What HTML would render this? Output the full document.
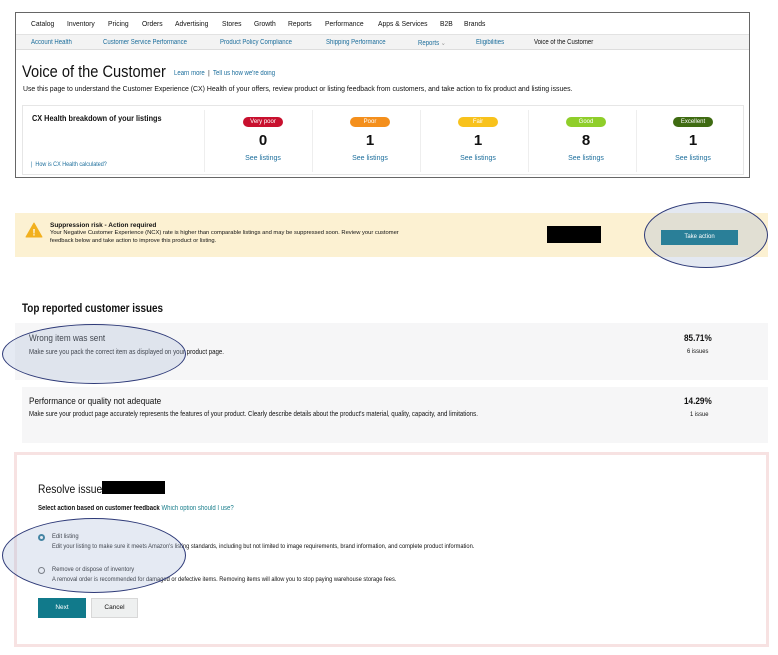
<!DOCTYPE html>
<html><head><style>
*{margin:0;padding:0;box-sizing:border-box}
body{width:778px;height:655px;background:#fff;font-family:"Liberation Sans",sans-serif;position:relative;overflow:hidden;color:#111}
.a{position:absolute;white-space:nowrap}
.c{transform-origin:0 0;transform:scaleX(.86)}
.l{color:#1c6e9c}
.nav{position:absolute;top:19px;font-size:7.5px;transform-origin:0 0;transform:scaleX(.9);white-space:nowrap}
.badge{position:absolute;width:40px;height:10px;border-radius:5px;color:#fff;font-size:6px;line-height:10px;text-align:center}
.num{position:absolute;width:60px;text-align:center;font-size:15px;font-weight:bold}
.see{position:absolute;width:60px;text-align:center;font-size:7px;color:#1c6e9c}
</style></head><body>
<div class="a" style="left:15px;top:12px;width:735px;height:166px;border:1px solid #666"></div>
<div class="a" style="left:16px;top:34px;width:733px;height:16px;background:#f3f3f3;border-top:1px solid #e2e2e2;border-bottom:1px solid #ddd"></div>
<div class="nav" style="left:31px">Catalog</div>
<div class="nav" style="left:67px">Inventory</div>
<div class="nav" style="left:108px">Pricing</div>
<div class="nav" style="left:142px">Orders</div>
<div class="nav" style="left:175px">Advertising</div>
<div class="nav" style="left:222px">Stores</div>
<div class="nav" style="left:254px">Growth</div>
<div class="nav" style="left:288px">Reports</div>
<div class="nav" style="left:325px">Performance</div>
<div class="nav" style="left:378px">Apps &amp; Services</div>
<div class="nav" style="left:440px">B2B</div>
<div class="nav" style="left:464px">Brands</div>
<div class="a l c" style="left:31px;top:39px;font-size:7px">Account Health</div>
<div class="a l c" style="left:103px;top:39px;font-size:7px">Customer Service Performance</div>
<div class="a l c" style="left:220px;top:39px;font-size:7px">Product Policy Compliance</div>
<div class="a l c" style="left:326px;top:39px;font-size:7px">Shipping Performance</div>
<div class="a l c" style="left:418px;top:39px;font-size:7px">Reports <span style="color:#999">⌄</span></div>
<div class="a l c" style="left:476px;top:39px;font-size:7px">Eligibilities</div>
<div class="a c" style="left:534px;top:39px;font-size:7px">Voice of the Customer</div>
<div class="a c" style="left:22px;top:62px;font-size:17px">Voice of the Customer</div>
<div class="a c" style="left:174px;top:70px;font-size:7px"><span class="l">Learn more</span> &nbsp;| &nbsp;<span class="l">Tell us how we're doing</span></div>
<div class="a" style="left:23px;top:86px;font-size:6.9px">Use this page to understand the Customer Experience (CX) Health of your offers, review product or listing feedback from customers, and take action to fix product and listing issues.</div>
<div class="a" style="left:22px;top:105px;width:722px;height:70px;border:1px solid #e6e6e6"></div>
<div class="a c" style="left:32px;top:113px;font-size:8.5px;font-weight:bold">CX Health breakdown of your listings</div>
<div class="a l c" style="left:31px;top:161px;font-size:6.3px">|&nbsp; How is CX Health calculated?</div>
<div class="a" style="left:204px;top:110px;width:1px;height:62px;background:#eee"></div>
<div class="a" style="left:312px;top:110px;width:1px;height:62px;background:#eee"></div>
<div class="a" style="left:420px;top:110px;width:1px;height:62px;background:#eee"></div>
<div class="a" style="left:528px;top:110px;width:1px;height:62px;background:#eee"></div>
<div class="a" style="left:636px;top:110px;width:1px;height:62px;background:#eee"></div>
<div class="badge" style="left:243px;top:117px;background:#c8102e">Very poor</div>
<div class="badge" style="left:350px;top:117px;background:#f48f1c">Poor</div>
<div class="badge" style="left:458px;top:117px;background:#f8c21c">Fair</div>
<div class="badge" style="left:566px;top:117px;background:#8fce2a">Good</div>
<div class="badge" style="left:673px;top:117px;background:#3f6b12">Excellent</div>
<div class="num" style="left:233px;top:132px">0</div>
<div class="num" style="left:340px;top:132px">1</div>
<div class="num" style="left:448px;top:132px">1</div>
<div class="num" style="left:556px;top:132px">8</div>
<div class="num" style="left:663px;top:132px">1</div>
<div class="see" style="left:233px;top:155px">See listings</div>
<div class="see" style="left:340px;top:155px">See listings</div>
<div class="see" style="left:448px;top:155px">See listings</div>
<div class="see" style="left:556px;top:155px">See listings</div>
<div class="see" style="left:663px;top:155px">See listings</div>

<div class="a" style="left:15px;top:213px;width:753px;height:44px;background:#fcf1d2"></div>
<svg class="a" style="left:25px;top:222px" width="18" height="16"><path d="M9 1 L17 15 L1 15 Z" fill="#f2b01e" stroke="#f2b01e" stroke-linejoin="round"/><text x="9" y="13.5" font-size="9" font-weight="bold" fill="#fff" text-anchor="middle" font-family="Liberation Sans">!</text></svg>
<div class="a" style="left:50px;top:222px;font-size:6.5px;font-weight:bold">Suppression risk - Action required</div>
<div class="a" style="left:50px;top:230px;font-size:5.8px;line-height:7.5px">Your Negative Customer Experience (NCX) rate is higher than comparable listings and may be suppressed soon. Review your customer<br>feedback below and take action to improve this product or listing.</div>
<div class="a" style="left:547px;top:226px;width:54px;height:17px;background:#000"></div>
<div class="a" style="left:644px;top:202px;width:124px;height:66px;border-radius:50%;background:rgba(175,190,215,.35);border:1px solid #2e3a78"></div>
<div class="a" style="left:661px;top:230px;width:77px;height:15px;background:#2a7f98;color:#fff;font-size:6px;line-height:15px;text-align:center">Take action</div>

<div class="a c" style="left:22px;top:303px;font-size:11.5px;font-weight:bold">Top reported customer issues</div>
<div class="a" style="left:15px;top:323px;width:753px;height:57px;background:#f6f6f7"></div>
<div class="a" style="left:22px;top:387px;width:746px;height:56px;background:#f6f6f7"></div>
<div class="a c" style="left:29px;top:333px;font-size:9.5px">Wrong item was sent</div>
<div class="a c" style="left:29px;top:348px;font-size:7.1px">Make sure you pack the correct item as displayed on your product page.</div>
<div class="a c" style="left:684px;top:333px;font-size:9.5px;font-weight:bold">85.71%</div>
<div class="a c" style="left:687px;top:348px;font-size:6.8px">6 issues</div>
<div class="a c" style="left:29px;top:396px;font-size:9.5px">Performance or quality not adequate</div>
<div class="a c" style="left:29px;top:410px;font-size:7.1px">Make sure your product page accurately represents the features of your product. Clearly describe details about the product's material, quality, capacity, and limitations.</div>
<div class="a c" style="left:684px;top:396px;font-size:9.5px;font-weight:bold">14.29%</div>
<div class="a c" style="left:690px;top:411px;font-size:6.8px">1 issue</div>
<div class="a" style="left:2px;top:324px;width:184px;height:60px;border-radius:50%;background:rgba(170,185,215,.3);border:1px solid #2e3a78"></div>

<div class="a" style="left:14px;top:452px;width:755px;height:195px;border:3px solid #f7e2e2"></div>
<div class="a c" style="left:38px;top:482px;font-size:12px">Resolve issue:</div>
<div class="a" style="left:102px;top:481px;width:63px;height:13px;background:#000"></div>
<div class="a c" style="left:38px;top:505px;font-size:7px"><b>Select action based on customer feedback</b> <span style="color:#1a7e8c">Which option should I use?</span></div>
<div class="a" style="left:38px;top:534px;width:7px;height:7px;border-radius:50%;border:2px solid #1a6f8f"></div>
<div class="a c" style="left:52px;top:533px;font-size:6.8px">Edit listing</div>
<div class="a c" style="left:52px;top:543px;font-size:6.65px">Edit your listing to make sure it meets Amazon's listing standards, including but not limited to image requirements, brand information, and complete product information.</div>
<div class="a" style="left:38px;top:567px;width:7px;height:7px;border-radius:50%;border:1px solid #666"></div>
<div class="a c" style="left:52px;top:566px;font-size:6.8px">Remove or dispose of inventory</div>
<div class="a c" style="left:52px;top:576px;font-size:6.65px">A removal order is recommended for damaged or defective items. Removing items will allow you to stop paying warehouse storage fees.</div>
<div class="a" style="left:2px;top:518px;width:184px;height:75px;border-radius:50%;background:rgba(170,185,215,.3);border:1px solid #2e3a78"></div>
<div class="a" style="left:38px;top:598px;width:48px;height:20px;background:#117a8b;color:#fff;font-size:6.5px;line-height:20px;text-align:center">Next</div>
<div class="a" style="left:91px;top:598px;width:47px;height:20px;background:#eef0f0;border:1px solid #d8d8d8;font-size:6.5px;line-height:18px;text-align:center">Cancel</div>
</body></html>
